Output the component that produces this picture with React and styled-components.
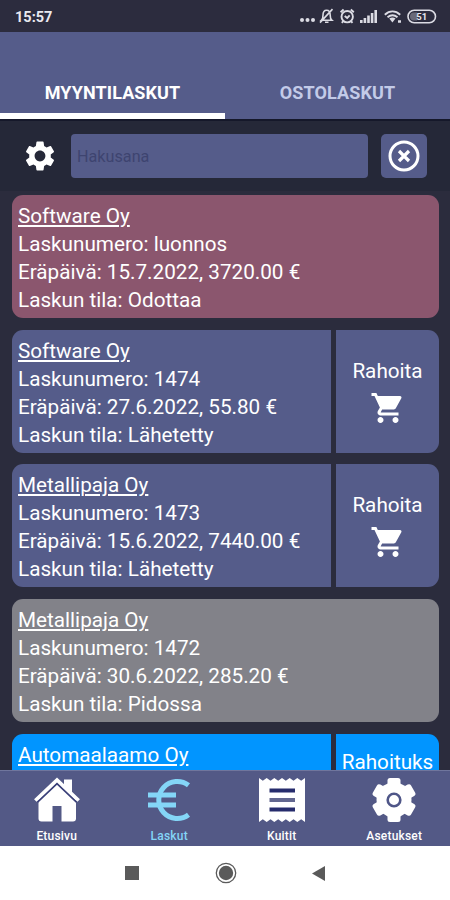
import styled, { createGlobalStyle } from "styled-components";
import { MdSettings, MdShoppingCart } from "react-icons/md";

const invoices = [
    { company: "Software Oy", number: "luonnos", due: "15.7.2022", sum: "3720.00", state: "Odottaa", color: "#8b566e" },
    { company: "Software Oy", number: "1474", due: "27.6.2022", sum: "55.80", state: "Lähetetty", color: "#555c8a", action: "Rahoita", cart: true },
    { company: "Metallipaja Oy", number: "1473", due: "15.6.2022", sum: "7440.00", state: "Lähetetty", color: "#555c8a", action: "Rahoita", cart: true },
    { company: "Metallipaja Oy", number: "1472", due: "30.6.2022", sum: "285.20", state: "Pidossa", color: "#828289" },
    { company: "Automaalaamo Oy", color: "#0195ff", action: "Rahoituks" },
];

const StatusIcons = () => (
    <svg width="142" height="20" viewBox="298 7 142 20" fill="none" stroke="#dcdce4" strokeWidth="1.6">
        <g fill="#dcdce4" stroke="none">
            <circle cx="302" cy="20" r="2" />
            <circle cx="307.5" cy="20" r="2" />
            <circle cx="313" cy="20" r="2" />
            <rect x="360" y="20" width="2.6" height="3" />
            <rect x="363.6" y="18" width="2.6" height="5" />
            <rect x="367.2" y="15.5" width="2.6" height="7.5" />
            <rect x="370.8" y="13" width="2.6" height="10" />
            <rect x="374.4" y="10" width="2.6" height="13" />
        </g>
        <path d="M321.500 20.200h10.300c-1.400-1.200-1.600-2-1.600-5 0-3-1.300-4.900-3.600-4.900s-3.600 1.900-3.600 4.900c0 3-.2 3.800-1.500 5zM325 22.300h3.500M320 22.600l12.500-13.500" />
        <circle cx="347.2" cy="16.7" r="5.7" strokeWidth="1.900" />
        <path d="M340.600 12.200l3-2.700M350.800 9.500l3 2.700M344.700 16l2.500 2 2.500-2.600M343.300 21.200l-1.500 1.600M351 21.200l1.500 1.600" strokeWidth="1.900" />
        <path d="M384.800 14.700c4.700-4.200 10.700-4.200 15.400 0M387.500 17.200c3.200-2.600 6.800-2.600 10 0" strokeWidth="1.900" />
        <path d="M389.300 18.600c2-1.500 4.300-1.500 6.200 0l-3.100 4z" fill="#dcdce4" stroke="none" />
        <path d="M398 21.500h3" strokeWidth="2.500" />
        <rect x="408" y="10.300" width="27.500" height="12.400" rx="6.200" />
        <path d="M417 12.500h-3a4 4 0 0 0 0 8h3z" fill="#dcdce4" fillOpacity=".35" stroke="none" />
        <text x="421.800" y="20" textAnchor="middle" fill="#e8e8ef" stroke="none" fontFamily="Roboto, sans-serif" fontSize="9.500" fontWeight="700">51</text>
    </svg>
);

const ClearIcon = () => (
    <svg width="32" height="32" viewBox="0 0 32 32" fill="none" stroke="#fff" strokeWidth="3">
        <circle cx="16" cy="16" r="14" />
        <path d="M11 11l10 10M21 11L11 21" strokeWidth="3.2" />
    </svg>
);

const HomeIcon = () => (
    <svg width="46" height="46" viewBox="0 0 46 46">
        <path d="M4.5 22L23 5.500 42 22v19.500a3 3 0 0 1-3 3H27.500V29h-9v15.500H7.500a3 3 0 0 1-3-3z" fill="#fff" />
        <path d="M30 2.500h8v14l-8-6z" fill="#fff" />
        <path d="M3.500 25L23 6.500 42.500 25" fill="none" stroke="#3a4079" strokeWidth="1.800" />
        <path d="M1.300 23.500L23 3l21.700 20.500" fill="none" stroke="#fff" strokeWidth="3.600" />
    </svg>
);

const EuroIcon = () => (
    <svg width="46" height="46" viewBox="0 0 46 46" fill="none" stroke="#84d6f7" strokeWidth="5">
        <path d="M42.500 8.300A18.500 18.500 0 1 0 42.500 37.700" />
        <path d="M2 18h28M2 28h28" strokeWidth="4.800" />
    </svg>
);

const ReceiptIcon = () => (
    <svg width="46" height="46" viewBox="0 0 46 46">
        <path d="M0 1l3.800 2.800L7.700 1l3.800 2.800L15.300 1l3.900 2.800L23 1l3.800 2.800L30.700 1l3.800 2.800L38.300 1l3.900 2.800L46 1v44l-3.800-2.800-3.900 2.800-3.800-2.800-3.800 2.800-3.900-2.800L23 45l-3.800-2.800-3.900 2.800-3.800-2.800L7.700 45l-3.900-2.800L0 45z" fill="#fff" />
        <path d="M10.500 13.500h25.500M10.500 32.500h25.500" stroke="#262c6c" strokeWidth="4" />
        <path d="M10.500 23h25.500" stroke="#62678f" strokeWidth="4" />
    </svg>
);

const GearIcon = () => (
    <svg width="46" height="46" viewBox="0 0 46 46">
        <g fill="#fff">
            <circle cx="23" cy="23" r="17.500" />
            {[0, 60, 120].map((angle) => (
                <rect key={angle} x="16.500" y="1" width="13" height="44" rx="2.500" transform={`rotate(${angle} 23 23)`} />
            ))}
        </g>
        <circle cx="23" cy="23" r="6.300" fill="#fff" stroke="#4f5688" strokeWidth="2.600" />
    </svg>
);

const InvoiceCard = ({ invoice }) => (
    <Card>
        <Details $color={invoice.color}>
            <Company>{invoice.company}</Company>
            {invoice.number && (
                <>
                    <Line>Laskunumero: {invoice.number}</Line>
                    <Line>Eräpäivä: {invoice.due}, {invoice.sum} €</Line>
                    <Line>Laskun tila: {invoice.state}</Line>
                </>
            )}
        </Details>
        {invoice.action && (
            <Finance $color={invoice.color} $top={invoice.cart ? 27 : 14}>
                {invoice.action}
                {invoice.cart && <MdShoppingCart size={36} />}
            </Finance>
        )}
    </Card>
);

const App = () => {
    return (
        <Screen>
            <GlobalStyle />
            <StatusBar>
                <Clock>15:57</Clock>
                <StatusIcons />
            </StatusBar>
            <Tabs>
                <Tab $active>MYYNTILASKUT</Tab>
                <Tab>OSTOLASKUT</Tab>
            </Tabs>
            <Filters>
                <MdSettings size={36} />
                <Search placeholder="Hakusana" type="text" />
                <Clear><ClearIcon /></Clear>
            </Filters>
            <List>
                {invoices.map((invoice, i) => <InvoiceCard key={i} invoice={invoice} />)}
            </List>
            <BottomNav>
                <NavItem><HomeIcon />Etusivu</NavItem>
                <NavItem $active><EuroIcon />Laskut</NavItem>
                <NavItem><ReceiptIcon />Kuitit</NavItem>
                <NavItem><GearIcon />Asetukset</NavItem>
            </BottomNav>
            <SystemNav>
                <svg width="14" height="14"><rect width="14" height="14" fill="#5a5a5a" /></svg>
                <svg width="22" height="22" viewBox="0 0 22 22">
                    <circle cx="11" cy="11" r="9.700" fill="none" stroke="#5a5a5a" strokeWidth="1.300" />
                    <circle cx="11" cy="11" r="7.200" fill="#5a5a5a" />
                </svg>
                <svg width="13" height="15" viewBox="0 0 14 16"><path d="M14 0v16L0 8z" fill="#5a5a5a" /></svg>
            </SystemNav>
        </Screen>
    )
}
export default App;

const GlobalStyle = createGlobalStyle`
*{
    box-sizing: border-box;
}
body{
    margin: 0;
    font-family: Roboto, sans-serif;
}
`;
const Screen = styled.div`
width: 450px;
height: 900px;
display: flex;
flex-direction: column;
overflow: hidden;
color: #fff;
background: #2b2c3d;
`;
const StatusBar = styled.div`
height: 32px;
flex-shrink: 0;
display: flex;
align-items: center;
justify-content: space-between;
padding: 2px 10px 0 15px;
background: #2c2c3e;
`;
const Clock = styled.span`
font-size: 14.5px;
font-weight: 700;
color: #e9e9ef;
`;
const Tabs = styled.div`
height: 89px;
flex-shrink: 0;
display: flex;
background: #555c8a;
border-bottom: 2px solid #15182a;
`;
const Tab = styled.div`
flex: 1;
display: flex;
justify-content: center;
padding-top: 50px;
font-size: 18px;
line-height: 22px;
letter-spacing: .1px;
font-weight: 700;
color: ${props => props.$active ? "#fff" : "#c3cbe8"};
border-bottom: 6px solid ${props => props.$active ? "#fff" : "transparent"};
`;
const Filters = styled.div`
height: 70px;
flex-shrink: 0;
display: flex;
align-items: center;
padding: 0 23px 0 22px;
background: #252838;
`;
const Search = styled.input`
width: 297px;
height: 44px;
margin: 0 13px;
padding: 0 6px;
border: 0;
outline: 0;
border-radius: 4px;
background: #555c8a;
font-family: Roboto, sans-serif;
font-size: 16.2px;
color: #fff;
&::placeholder{
    color: #3e4470;
    opacity: 1;
}
`;
const Clear = styled.button`
width: 46px;
height: 44px;
display: flex;
align-items: center;
justify-content: center;
padding: 0;
border: 0;
border-radius: 5px;
background: #555c8a;
`;
const List = styled.div`
flex: 1;
min-height: 0;
overflow: hidden;
display: flex;
flex-direction: column;
gap: 11.7px;
padding: 4px 11px 0 12px;
`;
const Card = styled.div`
height: 123px;
flex-shrink: 0;
display: flex;
gap: 5px;
border-radius: 11px;
overflow: hidden;
`;
const Details = styled.div`
flex: 1;
padding: 7px 6px 0;
background: ${props => props.$color};
`;
const Line = styled.div`
font-size: 20.7px;
line-height: 28px;
white-space: nowrap;
`;
const Company = styled(Line)`
text-decoration: underline;
text-decoration-thickness: 1.5px;
text-underline-offset: 2px;
`;
const Finance = styled.div`
width: 103px;
display: flex;
flex-direction: column;
align-items: center;
gap: 5px;
padding-top: ${props => props.$top}px;
font-size: 20.7px;
line-height: 28px;
background: ${props => props.$color};
`;
const BottomNav = styled.div`
height: 76px;
flex-shrink: 0;
display: flex;
background: #535986;
border-top: 1px solid #70769d;
`;
const NavItem = styled.div`
flex: 1;
display: flex;
flex-direction: column;
align-items: center;
justify-content: flex-end;
gap: 5px;
padding: 0 0 2px 1px;
font-size: 12px;
line-height: 16px;
letter-spacing: .2px;
font-weight: 500;
color: ${props => props.$active ? "#84d6f7" : "#fff"};
`;
const SystemNav = styled.div`
height: 54px;
flex-shrink: 0;
display: flex;
align-items: center;
justify-content: center;
gap: 75.5px;
background: #fff;
`;
